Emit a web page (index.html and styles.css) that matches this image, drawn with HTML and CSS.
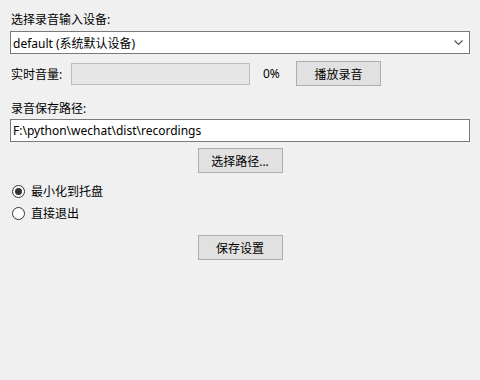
FILE: index.html
```html
<!DOCTYPE html>
<html>
    <head>
        <meta charset="utf-8" />
        <title>录音设置</title>
        <link rel="stylesheet" href="styles.css">
    </head>
    <body>
        <div class="panel">
            <!-- 输入设备 -->
            <div class="label first">选择录音输入设备:</div>
            <div class="combo">
                <span>default (系统默认设备)</span>
                <svg class="chevron" width="9" height="6" viewBox="0 0 9 6">
                    <polyline points="0.5,0.5 4.5,4.5 8.5,0.5" fill="none" stroke="#555" stroke-width="1.2" />
                </svg>
            </div>

            <!-- 音量 -->
            <div class="volume-row">
                <span class="vol-label">实时音量:</span>
                <div class="meter"></div>
                <span class="percent">0%</span>
                <button type="button" class="btn play">播放录音</button>
            </div>

            <!-- 保存路径 -->
            <div class="label second">录音保存路径:</div>
            <div class="path-input">F:\python\wechat\dist\recordings</div>
            <div class="center-row">
                <button type="button" class="btn">选择路径...</button>
            </div>

            <!-- 关闭行为 -->
            <div class="radios">
                <label class="radio"><span class="dot checked"></span>最小化到托盘</label>
                <label class="radio"><span class="dot"></span>直接退出</label>
            </div>

            <div class="center-row save">
                <button type="button" class="btn">保存设置</button>
            </div>
        </div>
    </body>
</html>
```

FILE: styles.css
```css
/* 整体背景与字体 */
body {
    margin: 0;
    background-color: #f0f0f0;
    font-family: "Noto Sans", "Noto Sans CJK SC", sans-serif;
    font-size: 12px;
    color: #000;
}

.panel {
    display: flex;
    flex-direction: column;
    padding: 12px 10px 0 10px;
    width: 460px;
}

.label {
    height: 16px;
    line-height: 16px;
    padding-left: 1px;
}

.label.first {
    margin-bottom: 3px;
}

.label.second {
    margin-top: 15px;
    margin-bottom: 2px;
}

/* 下拉框 */
.combo {
    display: flex;
    align-items: center;
    justify-content: space-between;
    height: 23px;
    box-sizing: border-box;
    border: 1px solid #7a7a7a;
    background-color: #fff;
    padding: 0 6px 0 2px;
}

.chevron {
    display: block;
}

/* 音量行 */
.volume-row {
    display: flex;
    align-items: center;
    margin-top: 7px;
    height: 25px;
}

.vol-label {
    width: 60px;
    padding-left: 1px;
}

.meter {
    width: 179px;
    height: 22px;
    box-sizing: border-box;
    border: 1px solid #bcbcbc;
    background-color: #e6e6e6;
}

.percent {
    margin-left: 13px;
    width: 33px;
}

/* 按钮样式 */
.btn {
    width: 85px;
    height: 25px;
    box-sizing: border-box;
    border: 1px solid #adadad;
    background-color: #e1e1e1;
    font-family: "Noto Sans", "Noto Sans CJK SC", sans-serif;
    font-size: 12px;
    color: #000;
    padding: 0;
}

/* 路径输入 */
.path-input {
    height: 23px;
    line-height: 21px;
    box-sizing: border-box;
    border: 1px solid #7a7a7a;
    background-color: #fff;
    padding-left: 2px;
}

.center-row {
    display: flex;
    justify-content: center;
    margin-top: 6px;
}

.center-row.save {
    margin-top: 11px;
}

/* 单选项 */
.radios {
    display: flex;
    flex-direction: column;
    margin-top: 7px;
}

.radio {
    display: flex;
    align-items: center;
    height: 22px;
    gap: 6px;
    padding-left: 2px;
}

.dot {
    width: 13px;
    height: 13px;
    box-sizing: border-box;
    border: 1px solid #333;
    border-radius: 50%;
    background-color: #fff;
    display: flex;
    align-items: center;
    justify-content: center;
}

.dot.checked::after {
    content: "";
    width: 7px;
    height: 7px;
    border-radius: 50%;
    background-color: #333;
}
```
